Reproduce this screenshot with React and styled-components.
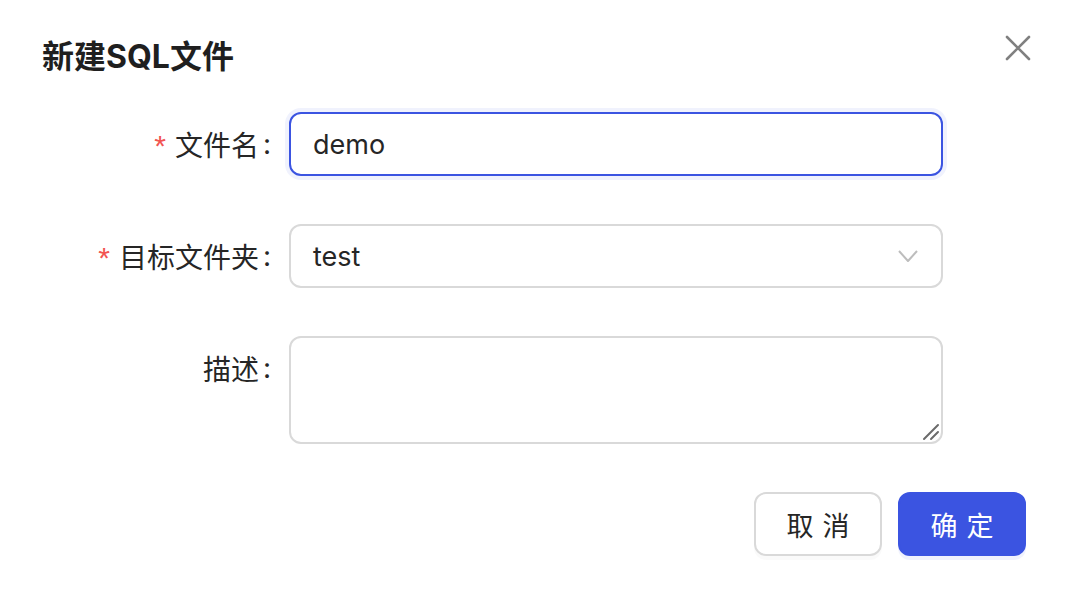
import { createGlobalStyle } from "styled-components";
import styled from "styled-components";

const GlobalStyle = createGlobalStyle`
  html, body {
    margin: 0;
    padding: 0;
    background: #ffffff;
  }
  * {
    box-sizing: border-box;
  }
`;

const font = `"Inter", "Noto Sans CJK SC", sans-serif`;

export default function App() {
  return (
    <>
      <GlobalStyle />
      <Modal>
        <Header>
          <Title>新建SQL文件</Title>
          <CloseButton aria-label="close">
            <svg width="28" height="28" viewBox="0 0 28 28">
              <path
                d="M3 3 L25 25 M25 3 L3 25"
                stroke="#808080"
                strokeWidth="2.6"
                strokeLinecap="round"
              />
            </svg>
          </CloseButton>
        </Header>

        <Form>
          <Row>
            <Label required>文件名</Label>
            <Input defaultValue="demo" focused />
          </Row>
          <Row>
            <Label required>目标文件夹</Label>
            <Select>
              <span>test</span>
              <svg width="22" height="14" viewBox="0 0 22 14">
                <path
                  d="M2 2 L11 12 L20 2"
                  fill="none"
                  stroke="#bdbdbd"
                  strokeWidth="2"
                  strokeLinejoin="round"
                />
              </svg>
            </Select>
          </Row>
          <Row>
            <Label>描述</Label>
            <TextAreaWrap>
              <TextArea />
              <Resizer width="18" height="18" viewBox="0 0 18 18">
                <path
                  d="M2 16 L16 2 M9 16 L16 9"
                  stroke="#6b6b6b"
                  strokeWidth="2"
                  strokeLinecap="round"
                />
              </Resizer>
            </TextAreaWrap>
          </Row>
        </Form>

        <Footer>
          <Button>取消</Button>
          <Button primary>确定</Button>
        </Footer>
      </Modal>
    </>
  );
}

const Modal = styled.div`
  width: 1070px;
  height: 590px;
  background: #ffffff;
  font-family: ${font};
  padding: 35px 44px 0 42px;
`;

const Header = styled.div`
  display: flex;
  justify-content: space-between;
  align-items: flex-start;
  height: 44px;
`;

const Title = styled.h1`
  margin: 0;
  font-size: 32px;
  line-height: 44px;
  font-weight: 700;
  color: #1f1f1f;
`;

const CloseButton = styled.button`
  border: none;
  background: none;
  padding: 0;
  margin: -1px -6px 0 0;
  width: 28px;
  height: 28px;
  cursor: pointer;
  display: flex;
`;

const Form = styled.div`
  display: flex;
  flex-direction: column;
  gap: 48px;
  margin-top: 33px;
`;

const Row = styled.div`
  display: grid;
  grid-template-columns: 231px 654px;
  column-gap: 16px;
  align-items: start;
`;

const Label = styled.label`
  height: 64px;
  display: flex;
  align-items: center;
  justify-content: flex-end;
  font-size: 28px;
  color: #262626;
  white-space: nowrap;
  padding-right: 2px;

  &::before {
    content: ${(p) => (p.required ? '"*"' : '""')};
    color: #f25451;
    font-size: 30px;
    font-family: "Liberation Sans", sans-serif;
    margin-right: 9px;
    margin-top: 4px;
  }
  &::after {
    content: ":";
    margin-left: 4px;
  }
`;

const Input = styled.input.attrs({ type: "text" })`
  height: 64px;
  width: 100%;
  border: 2px solid ${(p) => (p.focused ? "#3b54e1" : "#d9d9d9")};
  border-radius: 12px;
  padding: 0 22px;
  font-family: ${font};
  font-size: 27px;
  color: #262626;
  outline: none;
  box-shadow: ${(p) => (p.focused ? "0 0 0 4px rgba(59, 84, 225, 0.08)" : "none")};
`;

const Select = styled.div`
  height: 64px;
  border: 2px solid #d9d9d9;
  border-radius: 12px;
  padding: 0 22px 0 22px;
  display: flex;
  align-items: center;
  justify-content: space-between;
  font-size: 27px;
  color: #262626;

  svg {
    margin-right: 0;
  }
`;

const TextAreaWrap = styled.div`
  position: relative;
  height: 108px;
`;

const TextArea = styled.textarea`
  display: block;
  height: 108px;
  width: 100%;
  border: 2px solid #d9d9d9;
  border-radius: 12px;
  padding: 12px 22px;
  font-family: ${font};
  font-size: 27px;
  resize: none;
  outline: none;
`;

const Resizer = styled.svg`
  position: absolute;
  right: 3px;
  bottom: 3px;
  pointer-events: none;
`;

const Footer = styled.div`
  display: flex;
  justify-content: flex-end;
  gap: 16px;
  margin-top: 48px;
`;

const Button = styled.button`
  width: 128px;
  height: 64px;
  border-radius: 12px;
  font-family: ${font};
  font-size: 27px;
  letter-spacing: 0.34em;
  text-indent: 0.34em;
  cursor: pointer;
  border: 2px solid ${(p) => (p.primary ? "#3b54e1" : "#d9d9d9")};
  background: ${(p) => (p.primary ? "#3b54e1" : "#ffffff")};
  color: ${(p) => (p.primary ? "#ffffff" : "#262626")};
  box-shadow: 0 4px 0 ${(p) => (p.primary ? "rgba(59, 84, 225, 0.08)" : "rgba(0, 0, 0, 0.02)")};
`;
